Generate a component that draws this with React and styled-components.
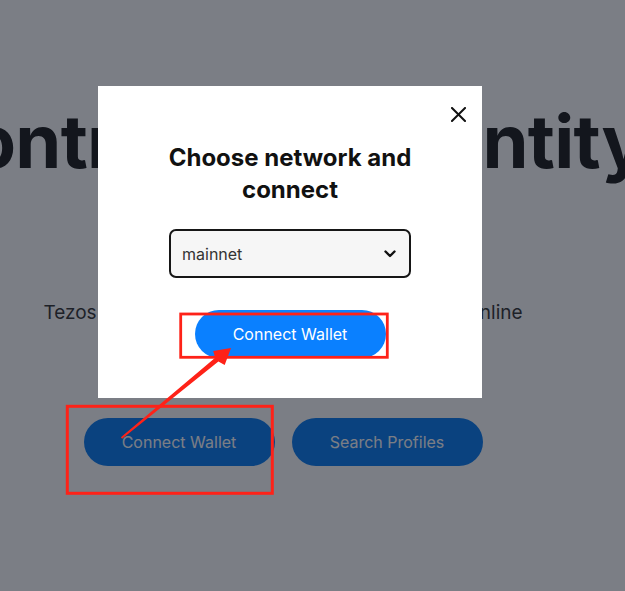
import React from "react";
import styled, { createGlobalStyle } from "styled-components";

const GlobalStyle = createGlobalStyle`
  html, body {
    margin: 0;
    padding: 0;
    overflow: hidden;
  }
  body {
    font-family: Inter, "Noto Sans", "Liberation Sans", sans-serif;
    background: #ffffff;
  }
  * { box-sizing: border-box; }
`;

const Screen = styled.div`
  position: relative;
  width: 625px;
  height: 591px;
  overflow: hidden;
  display: flex;
  background: #ffffff;
`;

const Column = styled.main`
  width: 566px;
  display: flex;
  flex-direction: column;
  align-items: center;
  padding-top: 97px;
`;

const Heading = styled.h1`
  margin: 0 0 0 -4px;
  font-size: 74px;
  line-height: 88px;
  font-weight: 700;
  letter-spacing: -0.01em;
  color: #262626;
  white-space: nowrap;
`;

const Lead = styled.p`
  margin: 114px 0 0;
  font-size: 19px;
  line-height: 28px;
  color: #3e3e3e;
  white-space: nowrap;
`;

const Actions = styled.div`
  display: flex;
  gap: 17px;
  margin-top: 91px;
`;

const PillButton = styled.button`
  width: 191px;
  height: 48px;
  border: none;
  border-radius: 24px;
  background: ${(p) => p.$bg || "#1482f3"};
  color: #ffffff;
  font-family: inherit;
  font-size: 16px;
  font-weight: 400;
  cursor: pointer;
  display: flex;
  align-items: center;
  justify-content: center;
`;

const Overlay = styled.div`
  position: absolute;
  inset: 0;
  background: rgba(1, 7, 22, 0.52);
`;

const Modal = styled.div`
  position: absolute;
  left: 98px;
  top: 86px;
  width: 384px;
  background: #ffffff;
  display: flex;
  flex-direction: column;
  align-items: center;
  padding: 56px 0 40px;
`;

const CloseButton = styled.button`
  position: absolute;
  top: 20px;
  right: 16px;
  width: 16px;
  height: 16px;
  padding: 0;
  border: none;
  background: transparent;
  display: flex;
  align-items: center;
  justify-content: center;
  cursor: pointer;
`;

const Title = styled.h2`
  margin: 0;
  font-size: 24px;
  line-height: 32px;
  font-weight: 700;
  color: #111111;
  text-align: center;
  width: 270px;
`;

const SelectWrap = styled.div`
  position: relative;
  margin-top: 23px;
  width: 242px;
  height: 49px;
`;

const NetworkSelect = styled.select`
  appearance: none;
  -webkit-appearance: none;
  width: 100%;
  height: 100%;
  border: 2px solid #161616;
  border-radius: 7px;
  background: #f6f6f6;
  padding: 0 36px 0 11px;
  font-family: inherit;
  font-size: 16px;
  color: #333333;
  outline: none;
`;

const Chevron = styled.svg`
  position: absolute;
  right: 15px;
  top: 50%;
  transform: translateY(-50%);
  pointer-events: none;
`;

const ModalAction = styled(PillButton)`
  margin-top: 32px;
`;

const Annotations = styled.svg`
  position: absolute;
  inset: 0;
  pointer-events: none;
`;

export default function App() {
  return (
    <>
      <GlobalStyle />
      <Screen>
        <Column>
          <Heading>Control your identity</Heading>
          <Lead>Tezos Profiles lets you verify and manage your online</Lead>
          <Actions>
            <PillButton>Connect Wallet</PillButton>
            <PillButton>Search Profiles</PillButton>
          </Actions>
        </Column>

        <Overlay />

        <Modal>
          <CloseButton aria-label="Close">
            <svg width="15" height="15" viewBox="0 0 15 15">
              <path d="M1 1 L14 14 M14 1 L1 14" stroke="#111" strokeWidth="2" strokeLinecap="square" />
            </svg>
          </CloseButton>
          <Title>Choose network and connect</Title>
          <SelectWrap>
            <NetworkSelect defaultValue="mainnet">
              <option value="mainnet">mainnet</option>
              <option value="ghostnet">ghostnet</option>
            </NetworkSelect>
            <Chevron width="12" height="8" viewBox="0 0 12 8">
              <path d="M1.5 1.5 L6 6 L10.5 1.5" fill="none" stroke="#111" strokeWidth="2.4" strokeLinecap="round" strokeLinejoin="round" />
            </Chevron>
          </SelectWrap>
          <ModalAction $bg="#0a80ff">Connect Wallet</ModalAction>
        </Modal>

        <Annotations width="625" height="591" viewBox="0 0 625 591">
          <rect x="180.7" y="314" width="206.6" height="43.3" fill="none" stroke="#fe2218" strokeWidth="2.8" />
          <rect x="67.3" y="406.3" width="205" height="87" fill="none" stroke="#fe2218" strokeWidth="3" />
          <polygon
            points="120.9,437.2 215.2,357.8 213.2,350.9 231,348 224.7,364.9 218.4,361.6 122.1,438.8"
            fill="#fe2218"
          />
        </Annotations>
      </Screen>
    </>
  );
}
